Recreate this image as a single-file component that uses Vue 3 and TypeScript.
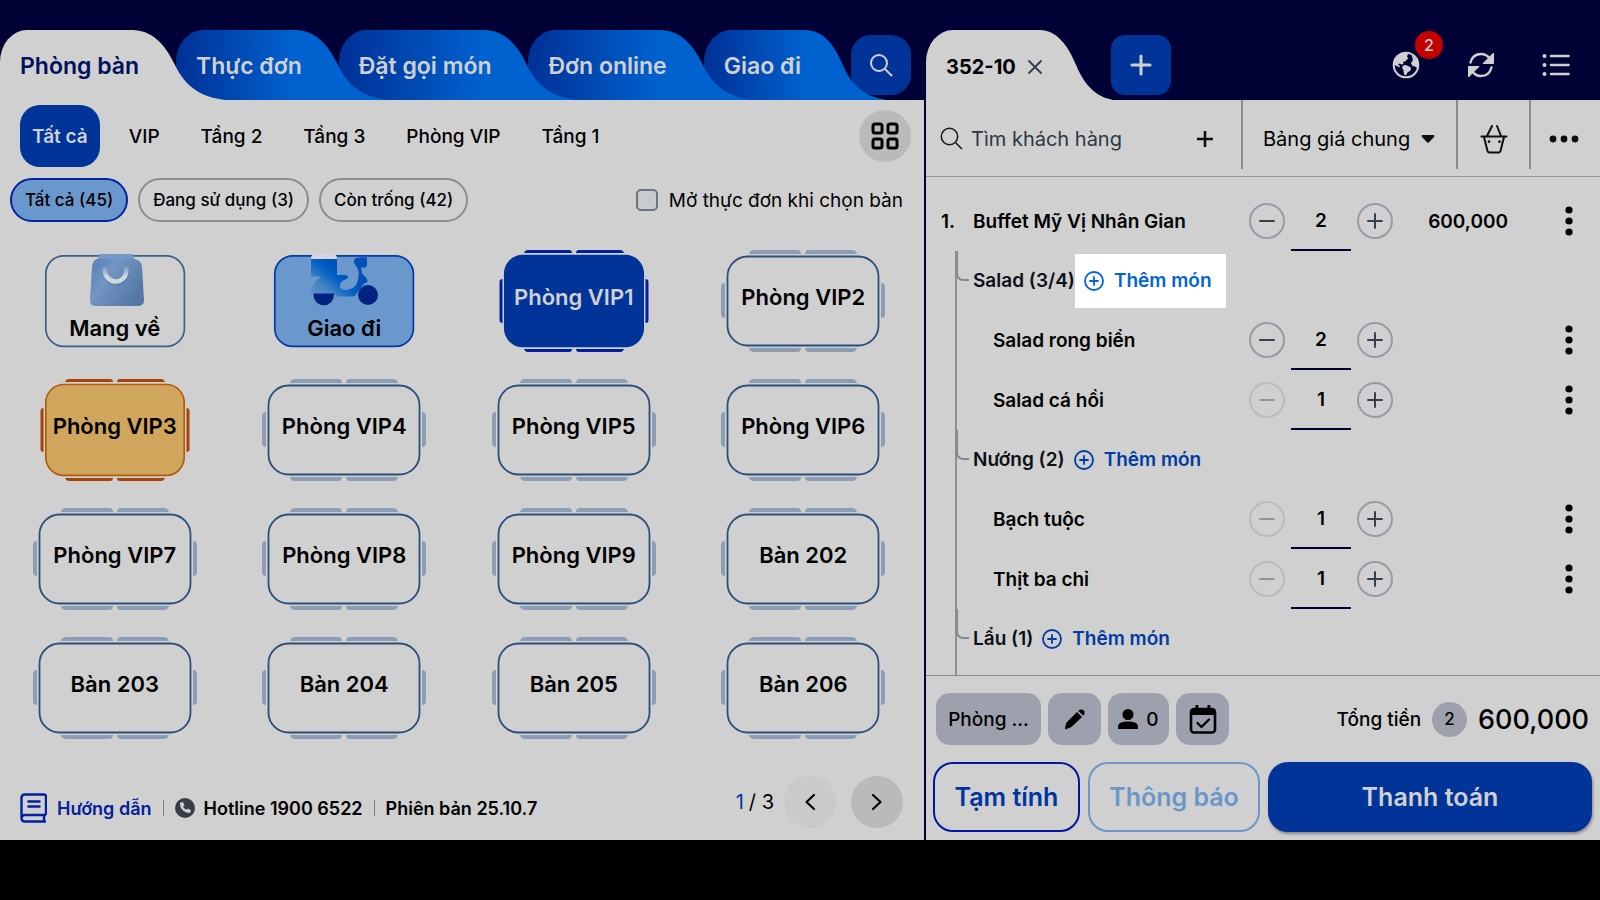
<script setup lang="ts">
import { ref } from 'vue'

type TableKind = 'free' | 'busy' | 'active' | 'takeaway' | 'delivery'
interface TableItem { name: string; kind: TableKind }
interface Dish { name: string; qty: number }
interface Group { name: string; highlighted?: boolean; dishes: Dish[] }

const menuTabs = ['Phòng bàn', 'Thực đơn', 'Đặt gọi món', 'Đơn online', 'Giao đi']
const areas = ['Tất cả', 'VIP', 'Tầng 2', 'Tầng 3', 'Phòng VIP', 'Tầng 1']
const statuses = ['Tất cả (45)', 'Đang sử dụng (3)', 'Còn trống (42)']
const openMenu = ref(false)
const customer = ref('')

const tables: TableItem[] = [
  { name: 'Mang về', kind: 'takeaway' },
  { name: 'Giao đi', kind: 'delivery' },
  { name: 'Phòng VIP1', kind: 'active' },
  { name: 'Phòng VIP2', kind: 'free' },
  { name: 'Phòng VIP3', kind: 'busy' },
  { name: 'Phòng VIP4', kind: 'free' },
  { name: 'Phòng VIP5', kind: 'free' },
  { name: 'Phòng VIP6', kind: 'free' },
  { name: 'Phòng VIP7', kind: 'free' },
  { name: 'Phòng VIP8', kind: 'free' },
  { name: 'Phòng VIP9', kind: 'free' },
  { name: 'Bàn 202', kind: 'free' },
  { name: 'Bàn 203', kind: 'free' },
  { name: 'Bàn 204', kind: 'free' },
  { name: 'Bàn 205', kind: 'free' },
  { name: 'Bàn 206', kind: 'free' },
]

const buffet = ref<Dish>({ name: 'Buffet Mỹ Vị Nhân Gian', qty: 2 })
const groups = ref<Group[]>([
  { name: 'Salad (3/4)', highlighted: true, dishes: [{ name: 'Salad rong biển', qty: 2 }, { name: 'Salad cá hồi', qty: 1 }] },
  { name: 'Nướng (2)', dishes: [{ name: 'Bạch tuộc', qty: 1 }, { name: 'Thịt ba chỉ', qty: 1 }] },
  { name: 'Lẩu (1)', dishes: [] },
])
</script>

<template>
  <div class="app">
    <section class="panel">
      <header class="bar">
        <nav class="tabs">
          <button v-for="(tab, i) in menuTabs" :key="tab" type="button" class="tab" :class="{ current: i === 0, last: i === menuTabs.length - 1 }">
            <span class="tab-body"></span>
            <svg class="tab-tail" viewBox="0 0 93 70" preserveAspectRatio="none" aria-hidden="true"><path d="M0 0C20 0 33 14 43 35C54 58 70 67 93 70H0Z" /></svg>
            <span class="tab-label">{{ tab }}</span>
          </button>
        </nav>
        <button type="button" class="square round" aria-label="Tìm kiếm">
          <svg width="24" height="24" viewBox="0 0 24 24" fill="none" stroke="currentColor" stroke-width="2"><circle cx="10" cy="10" r="8" /><path d="M16 16l7 7" /></svg>
        </button>
      </header>

      <div class="areas">
        <button v-for="(area, i) in areas" :key="area" type="button" class="area" :class="{ current: i === 0 }">{{ area }}</button>
        <button type="button" class="disc layout" aria-label="Kiểu hiển thị">
          <svg width="28" height="28" viewBox="0 0 28 28" fill="none" stroke="#000" stroke-width="3"><rect x="2" y="2" width="9" height="9" rx="2" /><rect x="17" y="2" width="9" height="9" rx="2" /><rect x="2" y="17" width="9" height="9" rx="2" /><rect x="17" y="17" width="9" height="9" rx="2" /></svg>
        </button>
      </div>

      <div class="statuses">
        <button v-for="(status, i) in statuses" :key="status" type="button" class="pill" :class="{ current: i === 0 }">{{ status }}</button>
        <label class="open-menu"><input v-model="openMenu" type="checkbox" /><span>Mở thực đơn khi chọn bàn</span></label>
      </div>

      <div class="tables">
        <button v-for="table in tables" :key="table.name" type="button" class="table" :class="table.kind">
          <svg class="shape" width="164" height="102" viewBox="0 0 164 102" aria-hidden="true">
            <template v-if="table.kind === 'free'">
              <g fill="#8c9db4">
                <path d="M28 4q1-4 5-4h43q4 0 4 4zM84 4q0-4 4-4h43q4 0 5 4zM28 98h52q0 4-4 4H33q-4 0-5-4zM84 98h52q-1 4-5 4H88q-4 0-4-4z" />
                <path d="M4 33v35q-4 0-4-4V37q0-4 4-4zM160 33v35q4 0 4-4V37q0-4-4-4z" />
              </g>
              <rect x="6.5" y="6.5" width="151" height="89" rx="20" fill="none" stroke="#2b4f7a" stroke-width="1.8" />
            </template>
            <template v-else-if="table.kind === 'takeaway' || table.kind === 'delivery'">
              <rect x="12.8" y="5.8" width="138.6" height="90.6" rx="18" :fill="table.kind === 'delivery' ? '#6a97cc' : 'none'" :stroke="table.kind === 'delivery' ? '#003ba8' : '#3a608a'" stroke-width="1.7" />
              <g v-if="table.kind === 'takeaway'">
                <path d="M66 4h34l2 7H64z" fill="#7399cc" />
                <path d="M65 9h35q8 0 9 8l2 33q0 6-6 6H63q-6 0-6-6l2-33q1-8 6-8z" fill="url(#bag)" />
                <path d="M71.500 20c1 18 23 18 23 0" fill="none" stroke="#52739f" stroke-width="5" stroke-linecap="round" opacity=".5" />
                <path d="M71.500 19.500c1 16 22 16 22 0" fill="none" stroke="url(#handle)" stroke-width="4.500" stroke-linecap="round" />
              </g>
              <g v-else>
                <path d="M51.500 43h20.500v2a10 10 0 0 1-20.500 0z" fill="#002480" />
                <path d="M49 8h26v17h8q3 0 3 2t-4 3q-4 2-4 6 0 4 5 4 9 0 12-7 3-9 1-14l-4-6q-1-3 2-5 4-1 11-.500v7q0 3-3 3h-3l1 6 4 4q2 2 1 5l-3 1-8 11q-1 2-4 2H76q-2 0-4-3H48q0-3 2-6 4-8 10-11H50q-1 0-1-2z" fill="url(#scooter)" />
                <circle cx="106" cy="45" r="10" fill="#002480" />
                <path d="M49 9q0-5 4-5h18q4 0 4 5z" fill="#d0d7df" />
              </g>
            </template>
            <template v-else>
              <g :fill="table.kind === 'busy' ? '#a5430a' : '#001fa0'">
                <path d="M32 3q1-3 4-3h41q3 0 3 3zM84 3q0-3 3-3h41q3 0 4 3zM32 99h48q0 3-3 3H36q-3 0-4-3zM84 99h48q-1 3-4 3H87q-3 0-3-3z" />
                <path d="M10.500 29v44q-3 0-3-3V32q0-3 3-3zM153.500 29v44q3 0 3-3V32q0-3-3-3z" />
              </g>
              <rect x="12.800" y="5.500" width="138.400" height="90.800" rx="18" :fill="table.kind === 'busy' ? '#cfa65c' : '#003499'" :stroke="table.kind === 'busy' ? '#b25c0a' : '#003499'" stroke-width="1.700" />
            </template>
          </svg>
          <span class="table-name">{{ table.name }}</span>
        </button>
      </div>

      <footer class="foot">
        <a class="guide" href="#">
          <svg width="27" height="30" viewBox="0 0 27 30" fill="none" stroke="currentColor" stroke-width="2.400" stroke-linejoin="round"><path d="M26 22V3.500Q26 1.500 24 1.500H5Q1.500 1.500 1.500 5V25q0 3.500 3.500 3.500H26M1.500 25Q1.500 22 5 22H26M24 22v6.500M7.500 8.500h13M7.500 13.500h13" /></svg>
          <span>Hướng dẫn</span>
        </a>
        <i class="sep"></i>
        <svg width="20" height="20" viewBox="0 0 20 20" aria-hidden="true"><circle cx="10" cy="10" r="10" fill="#363e48" /><path d="M6 4.500l2-.5 1.500 3.200-1.400 1.300q1 2.200 3.300 3.300l1.300-1.400 3.200 1.500-.5 2.200q-.3 1-1.500 1Q9.500 14.500 7 11.500 4.800 9 5 5.500q.1-.8 1-1z" fill="#d0d0d0" /></svg>
        <span class="hotline">Hotline 1900 6522</span>
        <i class="sep"></i>
        <span>Phiên bản 25.10.7</span>
        <div class="pager">
          <span class="pages"><b>1</b>/ 3</span>
          <button type="button" class="disc faint" aria-label="Trang trước"><svg width="12" height="18" viewBox="0 0 12 18" fill="none" stroke="currentColor" stroke-width="2.200" stroke-linecap="round" stroke-linejoin="round"><path d="M10 2L2.500 9l7.500 7" /></svg></button>
          <button type="button" class="disc" aria-label="Trang sau"><svg width="12" height="18" viewBox="0 0 12 18" fill="none" stroke="currentColor" stroke-width="2.200" stroke-linecap="round" stroke-linejoin="round"><path d="M2 2l7.500 7L2 16" /></svg></button>
        </div>
      </footer>
    </section>

    <section class="panel order">
      <header class="bar">
        <div class="tab current bill">
          <span class="tab-body"></span>
          <svg class="tab-tail" viewBox="0 0 93 70" preserveAspectRatio="none" aria-hidden="true"><path d="M0 0C20 0 35 14 46 35C58 58 74 67 93 70H0Z" /></svg>
          <span class="tab-label">352-10</span>
          <button type="button" class="close" aria-label="Đóng"><svg width="14" height="14" viewBox="0 0 14 14" stroke="#333d48" stroke-width="1.800" stroke-linecap="round"><path d="M1 1l12 12M13 1L1 13" /></svg></button>
        </div>
        <button type="button" class="square" aria-label="Thêm đơn"><svg width="22" height="22" viewBox="0 0 22 22" stroke="currentColor" stroke-width="3" stroke-linecap="round"><path d="M11 2v18M2 11h18" /></svg></button>
        <div class="tools">
          <button type="button" class="tool" aria-label="Ngôn ngữ">
            <svg width="28" height="28" viewBox="0 0 28 28"><circle cx="14" cy="14" r="12.300" fill="none" stroke="#d0d0d0" stroke-width="2" /><path d="M2 11Q5 3 13 1.500l3 1.500-1 3 1.500 1-3.500 3.500-2 .5.500 2-2 .5-2-1-1.500 1 2 1.500-1 1.500-2-1.500-3-1zM11 14.500l3-.5 5 2.500-.5 3-3 2-1.500 3-2-1-.5-4.500-1.500-2zM19.500 4L25 8.500l1.500 5-1 4-2.500-2-2.500-.5-1.500-3 2-3z" fill="#d0d0d0" /></svg>
            <span class="badge">2</span>
          </button>
          <button type="button" class="tool" aria-label="Đồng bộ">
            <svg width="28" height="28" viewBox="0 0 28 28"><path d="M3.500 11.500C5 6 9 3 14 3c4 0 7 2 9 5M24.500 16.500C23 22 19 25 14 25c-4 0-7-2-9-5" fill="none" stroke="#d0d0d0" stroke-width="2.400" stroke-linecap="round" /><path d="M26.500 2v10.500H16zM1.500 26V15.500H12z" fill="#d0d0d0" stroke="#d0d0d0" stroke-linejoin="round" /></svg>
          </button>
          <button type="button" class="tool" aria-label="Danh mục">
            <svg width="28" height="24" viewBox="0 0 28 24" fill="#d0d0d0"><circle cx="2.500" cy="3" r="2" /><circle cx="2.500" cy="12" r="2" /><circle cx="2.500" cy="21" r="2" /><path d="M9 3h17.500M9 12h17.500M9 21h17.500" stroke="#d0d0d0" stroke-width="2.600" stroke-linecap="round" /></svg>
          </button>
        </div>
      </header>

      <div class="customer">
        <div class="find">
          <svg width="23" height="23" viewBox="0 0 23 23" fill="none" stroke="#14181d" stroke-width="1.500" aria-hidden="true"><circle cx="9.500" cy="9.500" r="8.200" /><path d="M15.500 15.500l6.500 6.500" /></svg>
          <input v-model="customer" type="text" placeholder="Tìm khách hàng" aria-label="Tìm khách hàng" />
          <button type="button" aria-label="Thêm khách hàng"><svg width="18" height="18" viewBox="0 0 18 18" stroke="#0b0e12" stroke-width="2.600"><path d="M9 1v16M1 9h16" /></svg></button>
        </div>
        <div class="pricelist">
          <select aria-label="Bảng giá"><option>Bảng giá chung</option></select>
          <svg width="14" height="8" viewBox="0 0 14 8" fill="#0b0e12" aria-hidden="true"><path d="M1.500 0h11q1.500.5.500 2L8 7.300q-1 1-2 0L1 2q-1-1.500.5-2z" /></svg>
        </div>
        <button type="button" class="basket" aria-label="Giỏ hàng"><svg width="28" height="30" viewBox="0 0 28 30" fill="none" stroke="#0b0e12" stroke-width="2" stroke-linecap="round" stroke-linejoin="round"><path d="M1.500 12.500h25M7 12l5-10M21 12L17 2M4 13l3.500 14q.5 1.500 2 1.500h9q1.500 0 2-1.500L24 13" /><path d="M9 17.500v.2M19.500 17.500v.2" stroke-width="2.600" /></svg></button>
        <button type="button" class="more" aria-label="Thêm"><svg width="30" height="8" viewBox="0 0 30 8" fill="#0b0e12"><circle cx="4" cy="4" r="3.400" /><circle cx="15" cy="4" r="3.400" /><circle cx="26" cy="4" r="3.400" /></svg></button>
      </div>

      <div class="lines">
        <div class="line main">
          <span class="index">1.</span>
          <span class="dish">{{ buffet.name }}</span>
          <div class="stepper">
            <button type="button" aria-label="Giảm"><svg width="14" height="14" viewBox="0 0 14 14"><path d="M0 7h14" /></svg></button>
            <input v-model="buffet.qty" type="text" :aria-label="`Số lượng ${buffet.name}`" />
            <button type="button" aria-label="Tăng"><svg width="14" height="14" viewBox="0 0 14 14"><path d="M0 7h14M7 0v14" /></svg></button>
          </div>
          <span class="price">600,000</span>
          <button type="button" class="kebab" aria-label="Tùy chọn"><svg width="8" height="30" viewBox="0 0 8 30"><circle cx="4" cy="4" r="3.600" /><circle cx="4" cy="15" r="3.600" /><circle cx="4" cy="26" r="3.600" /></svg></button>
        </div>
        <div class="tree">
          <template v-for="group in groups" :key="group.name">
            <div class="group">
              <span>{{ group.name }}</span>
              <button type="button" class="add" :class="{ highlighted: group.highlighted }">
                <svg width="20" height="20" viewBox="0 0 20 20" fill="none" stroke="currentColor" stroke-width="1.800"><circle cx="10" cy="10" r="9" /><path d="M10 6v8M6 10h8" stroke-linecap="round" /></svg>
                <span>Thêm món</span>
              </button>
            </div>
            <div v-for="dish in group.dishes" :key="dish.name" class="line sub">
              <span class="dish">{{ dish.name }}</span>
              <div class="stepper">
                <button type="button" aria-label="Giảm" :disabled="dish.qty < 2"><svg width="14" height="14" viewBox="0 0 14 14"><path d="M0 7h14" /></svg></button>
                <input v-model="dish.qty" type="text" :aria-label="`Số lượng ${dish.name}`" />
                <button type="button" aria-label="Tăng"><svg width="14" height="14" viewBox="0 0 14 14"><path d="M0 7h14M7 0v14" /></svg></button>
              </div>
              <span class="price"></span>
              <button type="button" class="kebab" aria-label="Tùy chọn"><svg width="8" height="30" viewBox="0 0 8 30"><circle cx="4" cy="4" r="3.600" /><circle cx="4" cy="15" r="3.600" /><circle cx="4" cy="26" r="3.600" /></svg></button>
            </div>
          </template>
        </div>
      </div>

      <div class="summary">
        <button type="button" class="chip room">Phòng ...</button>
        <button type="button" class="chip" aria-label="Ghi chú"><svg width="22" height="22" viewBox="0 0 22 22"><path d="M13 4l5 5L8 18.500Q7 19.500 1 21.500 1.500 15.500 3 14zM14.300 2.800Q17 .300 19.500 2.300 22 5 19.200 7.800z" /></svg></button>
        <button type="button" class="chip guests" aria-label="Số khách 0"><svg width="20" height="20" viewBox="0 0 20 20"><circle cx="10" cy="5.500" r="5.500" /><path d="M0 20v-2.500Q0 12.500 10 12.500T20 17.500V20z" /></svg><span>0</span></button>
        <button type="button" class="chip" aria-label="Đặt lịch"><svg width="28" height="30" viewBox="0 0 28 30"><rect x="2" y="5" width="24" height="23.500" rx="3" fill="none" stroke="#000" stroke-width="2.600" /><path d="M2 5h24v6H2zM6.500 1h2.800v5H6.500zM18.500 1h2.800v5h-2.800z" /><path d="M8.500 19l4 4 7.500-7.500" fill="none" stroke="#000" stroke-width="2.400" stroke-linecap="round" stroke-linejoin="round" /></svg></button>
        <span class="total-label">Tổng tiền</span>
        <span class="count">2</span>
        <strong class="total">600,000</strong>
      </div>

      <div class="actions">
        <button type="button" class="action draft">Tạm tính</button>
        <button type="button" class="action notify">Thông báo</button>
        <button type="button" class="action pay">Thanh toán</button>
      </div>
    </section>

    <svg class="defs" width="0" height="0" aria-hidden="true">
      <defs>
        <linearGradient id="bag" x1="0" y1="0" x2="1" y2=".6"><stop offset="0" stop-color="#557fb5" /><stop offset=".4" stop-color="#7395c2" /><stop offset="1" stop-color="#5577a6" /></linearGradient>
        <linearGradient id="handle" x1="0" y1="0" x2="0" y2="1"><stop offset="0" stop-color="#8fabd0" /><stop offset=".6" stop-color="#cfd9dc" /></linearGradient>
        <linearGradient id="scooter" x1="0" y1=".9" x2=".6" y2=".4"><stop offset="0" stop-color="#5c93cc" /><stop offset=".35" stop-color="#4683c2" /><stop offset=".75" stop-color="#0060c4" /><stop offset="1" stop-color="#0051b8" /></linearGradient>
      </defs>
    </svg>
  </div>
</template>

<style>
body { background: #000; }
</style>

<style scoped>
.app {
  display: grid;
  grid-template-columns: minmax(0, 924fr) minmax(0, 674fr);
  gap: 2px;
  min-height: calc(100vh - 60px);
  background: #000236;
  color: #000;
  font-family: Inter, "Liberation Sans", sans-serif;
  font-size: 19px;
  font-weight: 500;
}
.app *, .app *::before { box-sizing: border-box; }
.defs { position: absolute; }
button, input, select { font: inherit; color: inherit; border: 0; margin: 0; padding: 0; background: none; }
button { display: flex; align-items: center; justify-content: center; cursor: pointer; white-space: nowrap; }
svg { display: block; flex: none; }
.panel { display: flex; flex-direction: column; background: #d0d0d0; min-width: 0; }

/* top bars */
.bar { display: flex; padding-top: 30px; height: 100px; background: #000236; }
.tabs { display: flex; position: relative; z-index: 1; }
.tab { position: relative; display: flex; align-items: center; height: 70px; padding: 2px 37px 0 20px; font-size: 23px; font-weight: 600; color: #d0d0d0; --tail: 93px; --inset: 43px; }
.tab.current { color: #00115e; }
.tab:nth-child(1) { z-index: 5; }
.tab:nth-child(2) { z-index: 4; }
.tab:nth-child(3) { z-index: 3; }
.tab:nth-child(4) { z-index: 2; }
.tab.last { --tail: 82px; --inset: 32px; }
.tab-body { position: absolute; inset: 0 var(--inset) 0 0; border-top-left-radius: 27px 32px; background: linear-gradient(90deg, #003096, #0062cf); }
.tab-tail { position: absolute; top: 0; left: calc(100% - var(--inset) - 1px); width: var(--tail); height: 70px; fill: #0062cf; }
.tab.current .tab-body { background: #d0d0d0; }
.tab.current .tab-tail { fill: #d0d0d0; }
.tab-label { position: relative; }
.square { width: 60px; height: 60px; margin-top: 5px; border-radius: 14px; background: #003499; color: #d0d0d0; }
.square.round { margin-left: auto; margin-right: 13px; border-radius: 20px; }
.tab.bill { --tail: 73px; --inset: 30px; padding: 4px 29px 0 20px; color: #000; font-size: 20px; font-weight: 700; }
.close { position: relative; margin-left: 12px; }
.bill + .square { margin-left: 40px; }
.tools { display: flex; gap: 45px; margin-left: auto; padding-right: 29px; align-items: center; }
.tool { position: relative; width: 30px; height: 40px; }
.badge { position: absolute; left: 24px; top: -14px; width: 28px; height: 28px; border-radius: 50%; background: #c40000; color: #d0d0d0; font-size: 16px; line-height: 28px; text-align: center; }

/* area filter */
.areas { display: flex; align-items: center; gap: 17px; height: 72px; padding: 0 13px 0 20px; }
.area { height: 62px; padding: 0 12px; border-radius: 20px; }
.area.current { background: #003499; color: #d0d0d0; font-weight: 600; }
.disc { width: 52px; height: 52px; border-radius: 50%; background: #bababa; }
.layout { margin-left: auto; }

/* status filter */
.statuses { display: flex; align-items: center; gap: 10px; padding: 6px 21px 0 10px; }
.pill { height: 44px; padding: 0 13px; border: 2px solid #8c8c8c; border-radius: 22px; font-size: 17px; }
.pill.current { background: #6a97cc; border-color: #0025a0; }
.open-menu { display: flex; align-items: center; gap: 11px; margin-left: auto; font-weight: 400; }
.open-menu input { appearance: none; width: 22px; height: 22px; border: 2px solid #6c747e; border-radius: 5px; background: #c9cccf; }

/* tables */
.tables { display: grid; grid-template-columns: repeat(4, minmax(0, 1fr)); grid-auto-rows: 129px; margin-top: 14px; padding-right: 6px; }
.table { display: grid; place-items: center; place-content: center; font-size: 22px; font-weight: 600; }
.shape { grid-area: 1 / 1; }
.table-name { grid-area: 1 / 1; padding-bottom: 8px; }
.active .table-name { color: #d0d0d0; }
.takeaway .table-name, .delivery .table-name { padding: 54px 0 0; }

/* footer */
.foot { display: flex; align-items: center; margin-top: auto; height: 64px; padding: 0 21px 0 20px; font-size: 18px; font-weight: 600; }
.guide { display: flex; align-items: center; gap: 10px; color: #00229c; text-decoration: none; }
.sep { width: 1px; height: 16px; margin: 0 11px; background: #7d8084; }
.hotline { margin-left: 9px; }
.pager { display: flex; align-items: center; gap: 15px; margin-left: auto; margin-bottom: 12px; }
.pages { font-size: 20px; font-weight: 400; margin-right: -5px; }
.pages b { color: #0038a0; font-weight: 400; margin-right: 5px; }
.disc.faint { background: #cacaca; }

/* customer row */
.customer { display: flex; align-items: flex-start; height: 77px; border-bottom: 1px solid #959595; }
.customer > * { height: 69px; padding-top: 8px; }
.find { display: flex; flex: 1; align-items: center; min-width: 0; padding-left: 14px; padding-right: 27px; }
.find input { flex: 1; min-width: 0; margin-left: 8px; outline: 0; font-size: 20px; font-weight: 400; }
.find input::placeholder { color: #2b3845; opacity: 1; }
.pricelist { display: flex; align-items: center; padding-left: 20px; padding-right: 21px; gap: 10px; border-left: 2px solid #8a8a8a; font-size: 20px; font-weight: 400; }
.pricelist select { appearance: none; outline: 0; }
.basket { width: 73px; border-left: 2px solid #8a8a8a; }
.more { width: 71px; padding-right: 4px; border-left: 2px solid #8a8a8a; }

/* order lines */
.lines { display: flex; flex: 1; flex-direction: column; padding-top: 14px; font-weight: 600; }
.line { display: flex; align-items: center; height: 60px; padding-right: 11px; }
.main { padding-left: 15px; }
.index { width: 32px; }
.dish { flex: 1; min-width: 0; }
.stepper { display: flex; align-items: center; gap: 6px; height: 60px; }
.stepper button { width: 36px; height: 36px; border: 2px solid #989ca9; border-radius: 50%; }
.stepper svg { fill: none; stroke: #37414d; stroke-width: 2; stroke-linecap: round; overflow: visible; }
.stepper button:disabled { opacity: .4; }
.stepper input { width: 60px; height: 60px; border-bottom: 2px solid #000030; outline: 0; text-align: center; border-radius: 0; }
.price { width: 115px; text-align: right; }
.kebab { width: 40px; height: 40px; margin-left: 41px; }
.tree { flex: 1; margin-left: 29px; border-left: 2px solid #8d8f92; }
.group { position: relative; display: flex; align-items: center; height: 59px; padding-left: 16px; color: #0c1016; }
.group::before { content: ""; position: absolute; left: -1px; top: 0; width: 13px; height: 30px; border: solid #85898e; border-width: 0 0 2px 2px; border-bottom-left-radius: 7px; }
.add { height: 54px; padding: 0 14px 0 9px; gap: 10px; color: #003aa3; }
.add.highlighted { background: #fff; color: #0064d8; }
.sub { padding-left: 36px; }

/* totals */
.summary { display: flex; align-items: center; gap: 7px; height: 87px; padding: 0 11px 0 10px; border-top: 1px solid #858a8a; }
.chip { width: 53px; height: 52px; border-radius: 14px; background: #9da1ad; }
.chip.room { width: 105px; }
.chip.guests { width: 61px; gap: 8px; }
.total-label { margin-left: auto; }
.count { width: 35px; height: 35px; margin: 0 4px; border-radius: 50%; background: #9da1ad; font-size: 17px; line-height: 35px; text-align: center; }
.total { font-size: 27px; font-weight: 500; }
.actions { display: flex; gap: 8px; padding: 0 8px 8px 7px; }
.action { height: 70px; border: 2px solid; border-radius: 20px; font-size: 25px; font-weight: 600; }
.draft { width: 147px; color: #0034a0; border-color: #0018a0; }
.notify { width: 172px; color: #6a97c8; }
.pay { flex: 1; color: #d0d0d0; background: #003499; border-color: #003499; box-shadow: 1px 2px 3px rgba(0, 0, 0, .35); }
</style>
